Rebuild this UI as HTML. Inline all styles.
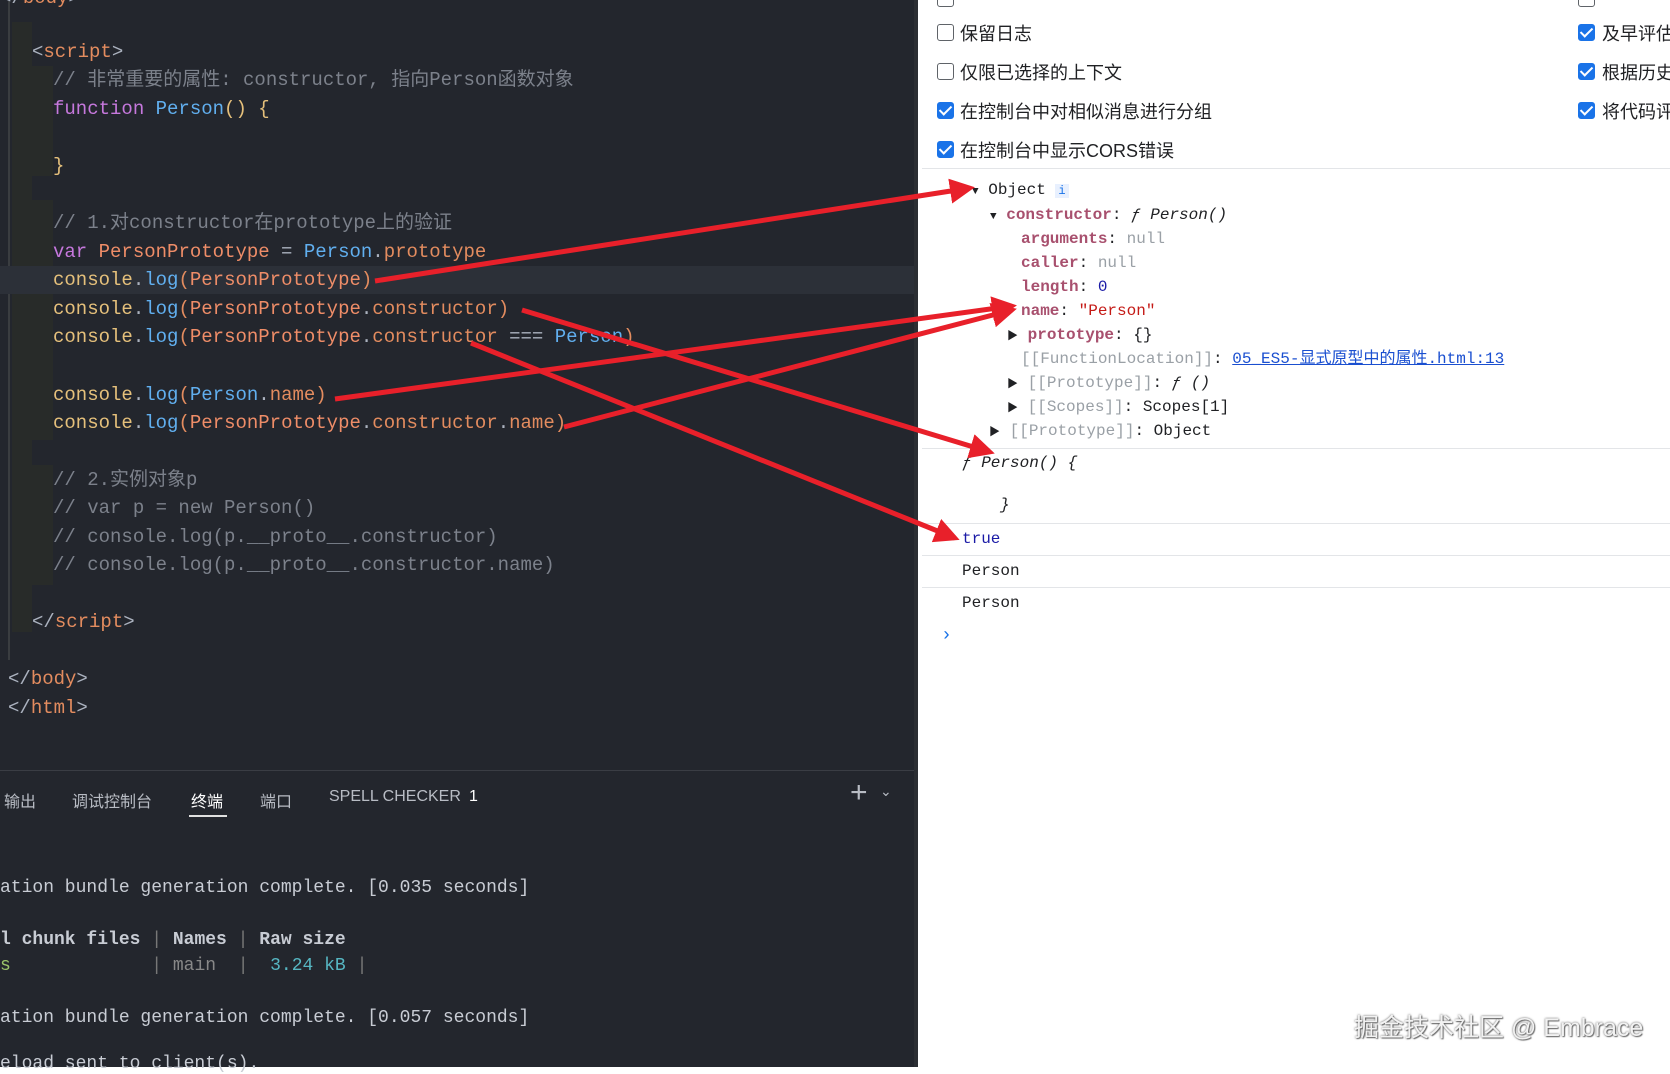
<!DOCTYPE html>
<html><head><meta charset="utf-8"><style>
*{margin:0;padding:0;box-sizing:border-box}
body{width:1670px;height:1067px;overflow:hidden;background:#fff;position:relative;font-family:"Liberation Sans","Noto Sans CJK SC",sans-serif}
#ed{position:absolute;left:0;top:0;width:918px;height:1067px;background:#23262d}
.cl{position:absolute;font-family:"Liberation Mono","Noto Sans CJK SC",monospace;font-size:19px;white-space:pre;line-height:28px;color:#abb2bf}
.c{color:#7c818b}.k{color:#c678dd}.f{color:#61afef}.v{color:#ef8d68}.y{color:#e5c07b}.t{color:#e38c5f}.p{color:#e06c75}
.g{position:absolute;background:#282b29}
#term{position:absolute;left:0;top:770px;width:918px;height:297px;border-top:1px solid #3a3d44;background:#23262d}
.tab{position:absolute;top:17px;font-size:16px;color:#b8bcc4;font-family:"Liberation Sans","Noto Sans CJK SC",sans-serif}
.tl{position:absolute;left:0;font-family:"Liberation Mono",monospace;font-size:18px;color:#c8ccd4;white-space:pre}
#dt{position:absolute;left:914px;top:0;width:756px;height:1067px;background:#fff;border-left:4px solid #2b2e33}
.cb{position:absolute;width:17px;height:17px;border:1.5px solid #5f6368;border-radius:3px}
.cb.on{background:#1a73e8;border-color:#1a73e8}
.cb.on:after{content:"";position:absolute;left:4px;top:0px;width:5px;height:10px;border:solid #fff;border-width:0 2px 2px 0;transform:rotate(45deg)}
.lb{position:absolute;font-size:18px;color:#202124;white-space:nowrap}
.r{position:absolute;font-family:"Liberation Mono","Noto Sans CJK SC",monospace;font-size:16px;color:#202124;white-space:pre;line-height:20px}
.pk{color:#a8506e;font-weight:bold}.gr{color:#9aa0a6}.nl{color:#9aa0a6}
.hr{position:absolute;left:4px;right:0;height:1px;background:#e3e5e8}
.tri{font-size:11px}
</style></head><body>
<div id="ed">
<div class="g" style="left:8px;top:0;width:2px;height:660px;background:#3a3d40"></div>
<div class="g" style="left:12px;top:22px;width:20px;height:610px"></div>
<div class="g" style="left:32px;top:66px;width:21px;height:110px"></div>
<div class="g" style="left:32px;top:200px;width:21px;height:190px"></div>
<div class="g" style="left:32px;top:380px;width:21px;height:60px"></div>
<div class="g" style="left:32px;top:465px;width:21px;height:120px"></div>
<div style="position:absolute;left:0;top:266px;width:918px;height:28px;background:#2c3038"></div>
<div class="cl" style="left:0;top:-16px"><span>&lt;/</span><span class="t">body</span>&gt;</div>
<div class="cl" style="left:32px;top:38px">&lt;<span class="t">script</span>&gt;</div>
<div class="cl" style="left:53px;top:66px"><span class="c">// 非常重要的属性: constructor, 指向Person函数对象</span></div>
<div class="cl" style="left:53px;top:95px"><span class="k">function</span> <span class="f">Person</span><span class="y">()</span> <span class="y">{</span></div>
<div class="cl" style="left:53px;top:152px"><span class="y">}</span></div>
<div class="cl" style="left:53px;top:209px"><span class="c">// 1.对constructor在prototype上的验证</span></div>
<div class="cl" style="left:53px;top:238px"><span class="k">var</span> <span class="v">PersonPrototype</span> = <span class="f">Person</span>.<span class="t">prototype</span></div>
<div class="cl" style="left:53px;top:266px"><span class="y">console</span>.<span class="f">log</span><span class="t">(</span><span class="v">PersonPrototype</span><span class="t">)</span></div>
<div class="cl" style="left:53px;top:295px"><span class="y">console</span>.<span class="f">log</span><span class="t">(</span><span class="v">PersonPrototype</span>.<span class="t">constructor</span><span class="t">)</span></div>
<div class="cl" style="left:53px;top:323px"><span class="y">console</span>.<span class="f">log</span><span class="t">(</span><span class="v">PersonPrototype</span>.<span class="t">constructor</span> === <span class="f">Person</span><span class="t">)</span></div>
<div class="cl" style="left:53px;top:381px"><span class="y">console</span>.<span class="f">log</span><span class="t">(</span><span class="f">Person</span>.<span class="t">name</span><span class="t">)</span></div>
<div class="cl" style="left:53px;top:409px"><span class="y">console</span>.<span class="f">log</span><span class="t">(</span><span class="v">PersonPrototype</span>.<span class="t">constructor</span>.<span class="t">name</span><span class="t">)</span></div>
<div class="cl" style="left:53px;top:466px"><span class="c">// 2.实例对象p</span></div>
<div class="cl" style="left:53px;top:494px"><span class="c">// var p = new Person()</span></div>
<div class="cl" style="left:53px;top:523px"><span class="c">// console.log(p.__proto__.constructor)</span></div>
<div class="cl" style="left:53px;top:551px"><span class="c">// console.log(p.__proto__.constructor.name)</span></div>
<div class="cl" style="left:32px;top:608px">&lt;/<span class="t">script</span>&gt;</div>
<div class="cl" style="left:8px;top:665px">&lt;/<span class="t">body</span>&gt;</div>
<div class="cl" style="left:8px;top:694px">&lt;/<span class="t">html</span>&gt;</div>
</div>
<div id="term">
<div class="tab" style="left:4px">输出</div>
<div class="tab" style="left:72px">调试控制台</div>
<div class="tab" style="left:191px;color:#fff">终端<div style="position:absolute;left:-2px;top:27px;width:38px;height:2px;background:#e0e0e0"></div></div>
<div class="tab" style="left:260px">端口</div>
<div class="tab" style="left:329px">SPELL CHECKER</div>
<div class="tab" style="left:469px;color:#fff">1</div>
<div class="tab" style="left:850px;top:5px;font-size:30px;font-weight:200">+</div>
<div class="tab" style="left:880px;top:12px;font-size:14px">⌄</div>
<div class="tl" style="top:107px">ation bundle generation complete. [0.035 seconds]</div>
<div class="tl" style="top:159px;font-weight:bold">l chunk files <span style="font-weight:normal;color:#777">|</span> Names <span style="font-weight:normal;color:#777">|</span> Raw size</div>
<div class="tl" style="top:185px"><span style="color:#9bc46a">s</span>             <span style="color:#777">|</span> <span style="color:#888">main</span>  <span style="color:#777">|</span>  <span style="color:#56b6c2">3.24 kB</span> <span style="color:#777">|</span></div>
<div class="tl" style="top:237px">ation bundle generation complete. [0.057 seconds]</div>
<div class="tl" style="top:283px">eload sent to client(s).</div>
</div>
<div id="dt">
<div class="cb" style="left:19px;top:-10px"></div><div class="cb" style="left:660px;top:-10px"></div>
<div class="cb" style="left:19px;top:24px"></div><div class="lb" style="left:42px;top:20px">保留日志</div>
<div class="cb" style="left:19px;top:63px"></div><div class="lb" style="left:42px;top:59px">仅限已选择的上下文</div>
<div class="cb on" style="left:19px;top:102px"></div><div class="lb" style="left:42px;top:98px">在控制台中对相似消息进行分组</div>
<div class="cb on" style="left:19px;top:141px"></div><div class="lb" style="left:42px;top:137px">在控制台中显示CORS错误</div>
<div class="cb on" style="left:660px;top:24px"></div><div class="lb" style="left:684px;top:20px">及早评估</div>
<div class="cb on" style="left:660px;top:63px"></div><div class="lb" style="left:684px;top:59px">根据历史</div>
<div class="cb on" style="left:660px;top:102px"></div><div class="lb" style="left:684px;top:98px">将代码评</div>
<div class="hr" style="top:168px"></div>
<div class="r" style="left:54px;top:180px"><span class="tri">▼</span> Object <span style="background:#e8f0fe;color:#1a73e8;font-size:12px;padding:0 3px">i</span></div>
<div class="r" style="left:72px;top:205px"><span class="tri">▼</span> <span class="pk">constructor</span>: <i style="color:#202124">ƒ Person()</i></div>
<div class="r" style="left:103px;top:229px"><span class="pk">arguments</span>: <span class="nl">null</span></div>
<div class="r" style="left:103px;top:253px"><span class="pk">caller</span>: <span class="nl">null</span></div>
<div class="r" style="left:103px;top:277px"><span class="pk">length</span>: <span style="color:#1a1aa6">0</span></div>
<div class="r" style="left:103px;top:301px"><span class="pk">name</span>: <span style="color:#c41a16">"Person"</span></div>
<div class="r" style="left:89px;top:325px"><span class="tri">▶</span> <span class="pk">prototype</span>: {}</div>
<div class="r" style="left:103px;top:349px"><span class="gr">[[FunctionLocation]]</span>: <span style="color:#1a4fd0;text-decoration:underline">05_ES5-显式原型中的属性.html:13</span></div>
<div class="r" style="left:89px;top:373px"><span class="tri">▶</span> <span class="gr">[[Prototype]]</span>: <i>ƒ ()</i></div>
<div class="r" style="left:89px;top:397px"><span class="tri">▶</span> <span class="gr">[[Scopes]]</span>: Scopes[1]</div>
<div class="r" style="left:71px;top:421px"><span class="tri">▶</span> <span class="gr">[[Prototype]]</span>: Object</div>
<div class="hr" style="top:448px"></div>
<div class="r" style="left:44px;top:453px;font-style:italic">ƒ Person() {</div>
<div class="r" style="left:82px;top:495px;font-style:italic">}</div>
<div class="hr" style="top:523px"></div>
<div class="r" style="left:44px;top:529px;color:#1a1aa6">true</div>
<div class="hr" style="top:555px"></div>
<div class="r" style="left:44px;top:561px">Person</div>
<div class="hr" style="top:587px"></div>
<div class="r" style="left:44px;top:593px">Person</div>
<div class="r" style="left:23px;top:626px;color:#1a73e8;font-size:18px">›</div>
<div style="position:absolute;left:436px;top:1008px;font-size:25px;color:#f2f2f2;text-shadow:0 0 2px #555,1px 1px 1px #777;white-space:nowrap">掘金技术社区 @ Embrace</div>
</div>
<svg style="position:absolute;left:0;top:0" width="1670" height="1067">
<defs><marker id="a" markerWidth="5" markerHeight="5" refX="4" refY="2.5" orient="auto" markerUnits="strokeWidth"><path d="M0,0 L5,2.5 L0,5 Z" fill="#e8202a"/></marker></defs>
<g stroke="#e8202a" stroke-width="5" fill="none" marker-end="url(#a)">
<line x1="375" y1="281" x2="970" y2="188"/>
<line x1="522" y1="310" x2="990" y2="452"/>
<line x1="471" y1="343" x2="955" y2="538"/>
<line x1="335" y1="399" x2="1012" y2="306"/>
<line x1="564" y1="427" x2="1012" y2="310"/>
</g></svg>
</body></html>
